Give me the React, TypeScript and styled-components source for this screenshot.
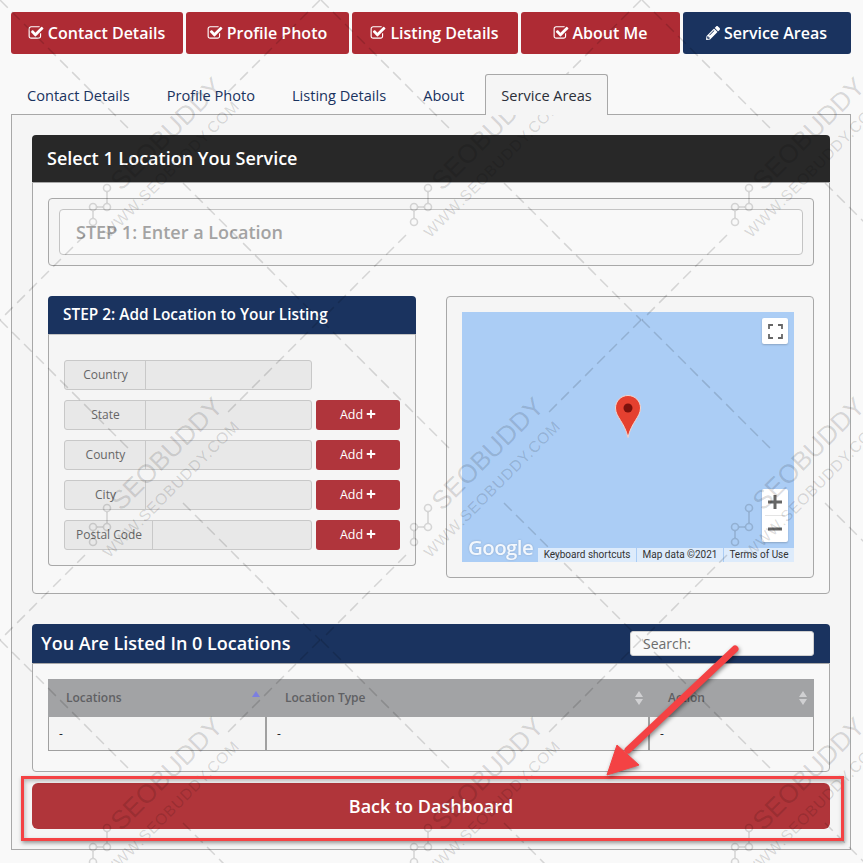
import styled, { createGlobalStyle } from 'styled-components';
import { FaPencilAlt, FaPlus } from 'react-icons/fa';

const steps = [
  { label: 'Contact Details', done: true },
  { label: 'Profile Photo', done: true },
  { label: 'Listing Details', done: true },
  { label: 'About Me', done: true },
  { label: 'Service Areas', done: false },
];

const tabs = ['Contact Details', 'Profile Photo', 'Listing Details', 'About', 'Service Areas'];

const fields = [
  { label: 'Country', canAdd: false },
  { label: 'State', canAdd: true },
  { label: 'County', canAdd: true },
  { label: 'City', canAdd: true },
  { label: 'Postal Code', canAdd: true },
];

const GlobalStyle = createGlobalStyle`
  * {
    box-sizing: border-box;
  }
  body {
    margin: 0;
    background: #f9f9f9;
    font-family: 'Open Sans', 'Liberation Sans', sans-serif;
  }
`;

const Page = styled.div`
  position: relative;
  width: 863px;
  height: 863px;
  overflow: hidden;
  padding: 12px 12px 0 11px;
`;

const StepBar = styled.div`
  display: grid;
  grid-template-columns: 172px 163px 166px 159px 168px;
  gap: 3px;
`;

const StepButton = styled.div<{ $active: boolean }>`
  height: 42px;
  display: flex;
  align-items: center;
  justify-content: center;
  gap: 4px;
  padding-right: 1px;
  border-radius: 3px;
  background: ${(p) => (p.$active ? '#1a335f' : '#ae2b34')};
  color: #fff;
  font-size: 16px;
  font-weight: 600;
`;

const TabRow = styled.div`
  display: flex;
  gap: 5px;
  margin-top: 20px;
`;

const Tab = styled.div<{ $active: boolean }>`
  position: relative;
  height: 41px;
  line-height: 40px;
  margin-bottom: -1px;
  padding: 0 15px;
  font-size: 14.6px;
  color: ${(p) => (p.$active ? '#2b2f38' : '#1a335f')};
  border: 1px solid ${(p) => (p.$active ? '#a8a8a8' : 'transparent')};
  border-bottom: 0;
  border-radius: 3px 3px 0 0;
  background: ${(p) => (p.$active ? '#f5f5f5' : 'transparent')};
  z-index: 1;
`;

const Panel = styled.div`
  height: 736px;
  padding: 20px;
  background: #f5f5f5;
  border: 1px solid #a8a8a8;
`;

const SectionHeader = styled.div<{ $tone: 'dark' | 'navy' }>`
  display: flex;
  align-items: center;
  justify-content: space-between;
  height: ${(p) => (p.$tone === 'dark' ? '47px' : '39px')};
  padding-left: ${(p) => (p.$tone === 'dark' ? '15px' : '9px')};
  padding-right: 16px;
  border-radius: 4px 4px 0 0;
  background: ${(p) => (p.$tone === 'dark' ? '#282828' : '#1a335f')};
  color: #fff;
  font-size: 18px;
  font-weight: 600;
`;

const SectionTitle = styled.span`
  margin-top: -2px;
`;

const SectionBody = styled.div`
  padding: 15px;
  background: #f8f8f8;
  border: 1px solid #a8a8a8;
  border-radius: 0 0 4px 4px;
`;

const LocationBox = styled.div`
  padding: 10px;
  border: 1px solid #a8a8a8;
  border-radius: 4px;
  background: #f5f5f5;
`;

const LocationInput = styled.input`
  display: block;
  width: 100%;
  height: 46px;
  padding: 0 16px;
  border: 1px solid #c4c4c4;
  border-radius: 4px;
  background: #f9f9f9;
  font-family: inherit;
  font-size: 18px;
  font-weight: 600;
  &::placeholder {
    color: #a3a3a3;
    opacity: 1;
  }
`;

const Columns = styled.div`
  display: grid;
  grid-template-columns: 368px 368px;
  gap: 30px;
  margin-top: 30px;
`;

const SubHeader = styled.div`
  height: 38px;
  line-height: 37px;
  padding-left: 15px;
  border-radius: 4px 4px 0 0;
  background: #1a335f;
  color: #fff;
  font-size: 15.4px;
  font-weight: 600;
`;

const FormBox = styled.div`
  display: flex;
  flex-direction: column;
  gap: 10px;
  height: 232px;
  padding: 25px 15px 15px;
  background: #f5f5f5;
  border: 1px solid #a8a8a8;
  border-top-color: #c4c4c4;
  border-radius: 0 0 4px 4px;
`;

const FieldRow = styled.div`
  display: flex;
  gap: 4px;
  height: 30px;
`;

const InputGroup = styled.div`
  display: flex;
  width: 248px;
  border: 1px solid #c8c8c8;
  border-radius: 3px;
  background: #e8e8e8;
`;

const AddOn = styled.div`
  min-width: 81px;
  padding: 0 10px 0 11px;
  line-height: 28px;
  text-align: center;
  font-size: 12px;
  color: #666;
  border-right: 1px solid #c8c8c8;
`;

const AddButton = styled.div`
  display: flex;
  align-items: center;
  justify-content: center;
  gap: 3px;
  width: 84px;
  padding-bottom: 2px;
  border-radius: 3px;
  background: #b0353c;
  color: #fff;
  font-size: 12.5px;
`;

const MapBox = styled.div`
  height: 282px;
  padding: 15px 19px 15px 15px;
  background: #f5f5f5;
  border: 1px solid #a8a8a8;
  border-radius: 4px;
`;

const MapCanvas = styled.div`
  position: relative;
  height: 250px;
  background: #abcdf5;
`;

const MapControl = styled.div`
  position: absolute;
  right: 6px;
  width: 26px;
  display: flex;
  flex-direction: column;
  align-items: center;
  justify-content: center;
  background: #fff;
  border-radius: 2px;
  box-shadow: 0 1px 2px rgba(0, 0, 0, 0.2);
`;

const FullscreenControl = styled(MapControl)`
  top: 6px;
  height: 26px;
`;

const ZoomControl = styled(MapControl)`
  bottom: 20px;
  height: 53px;
`;

const ZoomDivider = styled.div`
  width: 20px;
  height: 1px;
  background: #e4e4e4;
`;

const Marker = styled.svg`
  position: absolute;
  left: 153px;
  top: 83px;
`;

const GoogleMark = styled.div`
  position: absolute;
  left: 6px;
  bottom: 1px;
  font-size: 20.5px;
  font-weight: 600;
  letter-spacing: -0.6px;
  color: #fff;
  opacity: 0.85;
  text-shadow: 0 0 2px rgba(90, 110, 140, 0.5);
`;

const Attribution = styled.div`
  position: absolute;
  right: 0;
  bottom: 0;
  display: flex;
  height: 14px;
  background: rgba(255, 255, 255, 0.6);
  font-family: Roboto, 'Liberation Sans', sans-serif;
  font-size: 10px;
  line-height: 14px;
  color: #333;
`;

const AttributionItem = styled.div<{ $width: number }>`
  width: ${(p) => p.$width}px;
  text-align: center;
  & + & {
    border-left: 1px solid #abcdf5;
  }
`;

const ListedSection = styled.div`
  margin-top: 30px;
`;

const SearchInput = styled.input`
  width: 184px;
  height: 25px;
  padding: 0 12px;
  border: 1px solid #d0d0d0;
  border-radius: 3px;
  background: #f9f9f9;
  font-family: inherit;
  font-size: 14px;
  &::placeholder {
    color: #6d6d6d;
    opacity: 1;
  }
`;

const TableBody = styled(SectionBody)`
  height: 109px;
`;

const Table = styled.table`
  width: 766px;
  table-layout: fixed;
  border-collapse: separate;
  border-spacing: 0;
`;

const HeadCell = styled.th<{ $width: number }>`
  position: relative;
  width: ${(p) => p.$width}px;
  height: 38px;
  padding: 0 18px 2px;
  background: #a2a3a5;
  color: #5f6063;
  font-size: 12px;
  font-weight: 600;
  text-align: left;
`;

const BodyCell = styled.td`
  height: 34px;
  padding: 0 10px;
  background: #f4f4f4;
  border-right: 1px solid #a0a0a0;
  border-bottom: 1px solid #a0a0a0;
  font-size: 12px;
  color: #22252c;
  &:first-child {
    border-left: 1px solid #a0a0a0;
  }
  &:not(:last-child) {
    border-right-width: 2px;
  }
`;

const SortIcon = styled.svg`
  position: absolute;
  right: 6px;
  top: 11px;
`;

const BackButton = styled.div`
  height: 46px;
  margin-top: 11px;
  display: flex;
  align-items: center;
  justify-content: center;
  border-radius: 6px;
  background: #b0353a;
  color: #fff;
  font-size: 18px;
  font-weight: 600;
`;

const Watermark = styled.svg`
  position: absolute;
  inset: 0;
  pointer-events: none;
  font-family: 'Liberation Sans', sans-serif;
`;

const Highlight = styled.div`
  position: absolute;
  left: 21px;
  top: 776px;
  width: 823px;
  height: 65px;
  border: 3px solid #f44244;
  box-shadow: 1px 2px 4px rgba(0, 0, 0, 0.4), inset 1px 2px 4px rgba(0, 0, 0, 0.25);
  pointer-events: none;
`;

const Arrow = styled.svg`
  position: absolute;
  left: 0;
  top: 0;
  pointer-events: none;
  filter: drop-shadow(1px 2px 2px rgba(0, 0, 0, 0.45));
`;

function CheckIcon() {
  return (
    <svg width="16" height="16" viewBox="0 0 1792 1792" fill="currentColor">
      <path d="M1472 930v318q0 119-84.500 203.500t-203.500 84.500h-832q-119 0-203.500-84.500t-84.500-203.500v-832q0-119 84.500-203.500t203.500-84.500h832q63 0 117 25 15 7 18 23 3 17-9 29l-49 49q-10 10-23 10-3 0-9-2-23-6-45-6h-832q-66 0-113 47t-47 113v832q0 66 47 113t113 47h832q66 0 113-47t47-113v-254q0-13 9-22l64-64q10-10 23-10 6 0 12 3 20 8 20 29zm231-489l-814 814q-24 24-57 24t-57-24l-430-430q-24-24-24-57t24-57l110-110q24-24 57-24t57 24l263 263 647-647q24-24 57-24t57 24l110 110q24 24 24 57t-24 57z" />
    </svg>
  );
}

function SortArrows({ active }: { active?: boolean }) {
  return (
    <SortIcon width="10" height="16" viewBox="0 0 10 16">
      <path d="M5 1l4 6H1z" fill={active ? '#7c7fe0' : '#d0d0d2'} />
      {!active && <path d="M5 15l4-6H1z" fill="#d0d0d2" />}
    </SortIcon>
  );
}

// repeated stamp: dashed lattice, wordmark and the little node logo
function WatermarkTile({ x, y }: { x: number; y: number }) {
  const ink = 'rgba(0,0,0,0.14)';
  return (
    <g transform={`translate(${x} ${y})`}>
      <g stroke={ink} strokeWidth="1.5" strokeDasharray="11 6" fill="none">
        <path d="M320 0L225 95M85 235L0 320M0 0L130 130M183 183L320 320" />
      </g>
      <g fill={ink}>
        <text transform="translate(168 135) rotate(-45)" textAnchor="middle" dominantBaseline="middle" fontSize="26">
          SEOBUDDY
        </text>
        <text transform="translate(172 170) rotate(-45)" textAnchor="middle" dominantBaseline="middle" fontSize="15.500" letterSpacing="0.8">
          WWW.SEOBUDDY.COM
        </text>
      </g>
      <g stroke={ink} strokeWidth="1.6" fill="none">
        <circle cx="107" cy="188" r="3.500" />
        <circle cx="107" cy="207" r="3.500" />
        <circle cx="93" cy="207" r="3.500" />
        <circle cx="93" cy="222" r="3.500" />
        <path d="M107 192v11M97 207h6M93 211v7" />
      </g>
    </g>
  );
}

export default function App() {
  const tiles = [0, 1, 2].flatMap((row) => [0, 1, 2].map((col) => ({ x: col * 321, y: row * 320 })));

  return (
    <Page>
      <GlobalStyle />
      <StepBar>
        {steps.map((s) => (
          <StepButton key={s.label} $active={!s.done}>
            {s.done ? <CheckIcon /> : <FaPencilAlt size={14} />}
            {s.label}
          </StepButton>
        ))}
      </StepBar>

      <TabRow>
        {tabs.map((t) => (
          <Tab key={t} $active={t === 'Service Areas'}>
            {t}
          </Tab>
        ))}
      </TabRow>

      <Panel>
        <SectionHeader $tone="dark">
          <SectionTitle>Select 1 Location You Service</SectionTitle>
        </SectionHeader>
        <SectionBody>
          <LocationBox>
            <LocationInput placeholder="STEP 1: Enter a Location" />
          </LocationBox>
          <Columns>
            <div>
              <SubHeader>STEP 2: Add Location to Your Listing</SubHeader>
              <FormBox>
                {fields.map((f) => (
                  <FieldRow key={f.label}>
                    <InputGroup>
                      <AddOn>{f.label}</AddOn>
                    </InputGroup>
                    {f.canAdd && (
                      <AddButton>
                        Add <FaPlus size={10} />
                      </AddButton>
                    )}
                  </FieldRow>
                ))}
              </FormBox>
            </div>
            <MapBox>
              <MapCanvas>
                <FullscreenControl>
                  <svg width="15" height="15" viewBox="0 0 15 15" fill="none" stroke="#666" strokeWidth="1.8">
                    <path d="M1 5V1h4M10 1h4v4M14 10v4h-4M5 14H1v-4" />
                  </svg>
                </FullscreenControl>
                <ZoomControl>
                  <svg width="16" height="26" viewBox="0 0 16 26" fill="#666">
                    <path d="M6.500 6h3v5.500H15v3H9.500V20h-3v-5.500H1v-3h5.500z" />
                  </svg>
                  <ZoomDivider />
                  <svg width="16" height="26" viewBox="0 0 16 26" fill="#666">
                    <path d="M1 11.500h14v3H1z" />
                  </svg>
                </ZoomControl>
                <Marker width="26" height="43" viewBox="0 0 26 43">
                  <path
                    d="M13 .5C6 .5.500 6 .500 13c0 9 9 14 12.500 29.500C16.500 27 25.500 22 25.500 13 25.500 6 20 .5 13 .5z"
                    fill="#e5402f"
                    stroke="#f3d6d0"
                    strokeWidth="1"
                  />
                  <circle cx="13" cy="13" r="4.500" fill="#7c110c" />
                </Marker>
                <GoogleMark>Google</GoogleMark>
                <Attribution>
                  <AttributionItem $width={98}>Keyboard shortcuts</AttributionItem>
                  <AttributionItem $width={87}>Map data ©2021</AttributionItem>
                  <AttributionItem $width={71}>Terms of Use</AttributionItem>
                </Attribution>
              </MapCanvas>
            </MapBox>
          </Columns>
        </SectionBody>

        <ListedSection>
          <SectionHeader $tone="navy">
            <SectionTitle>You Are Listed In 0 Locations</SectionTitle>
            <SearchInput placeholder="Search:" />
          </SectionHeader>
          <TableBody>
            <Table>
              <thead>
                <tr>
                  <HeadCell $width={219}>
                    Locations
                    <SortArrows active />
                  </HeadCell>
                  <HeadCell $width={383}>
                    Location Type
                    <SortArrows />
                  </HeadCell>
                  <HeadCell $width={164}>
                    Action
                    <SortArrows />
                  </HeadCell>
                </tr>
              </thead>
              <tbody>
                <tr>
                  <BodyCell>-</BodyCell>
                  <BodyCell>-</BodyCell>
                  <BodyCell>-</BodyCell>
                </tr>
              </tbody>
            </Table>
          </TableBody>
        </ListedSection>

        <BackButton>Back to Dashboard</BackButton>
      </Panel>

      <Watermark width="863" height="863" viewBox="0 0 863 863">
        {tiles.map((t) => (
          <WatermarkTile key={`${t.x}-${t.y}`} x={t.x} y={t.y} />
        ))}
      </Watermark>

      <Highlight />
      <Arrow width="863" height="863" viewBox="0 0 863 863">
        <path d="M735 649L628 750" stroke="#f44244" strokeWidth="7" strokeLinecap="round" fill="none" />
        <path d="M607 775L617 745L639 765z" fill="#f44244" stroke="#f44244" strokeWidth="1" strokeLinejoin="round" />
      </Arrow>
    </Page>
  );
}
